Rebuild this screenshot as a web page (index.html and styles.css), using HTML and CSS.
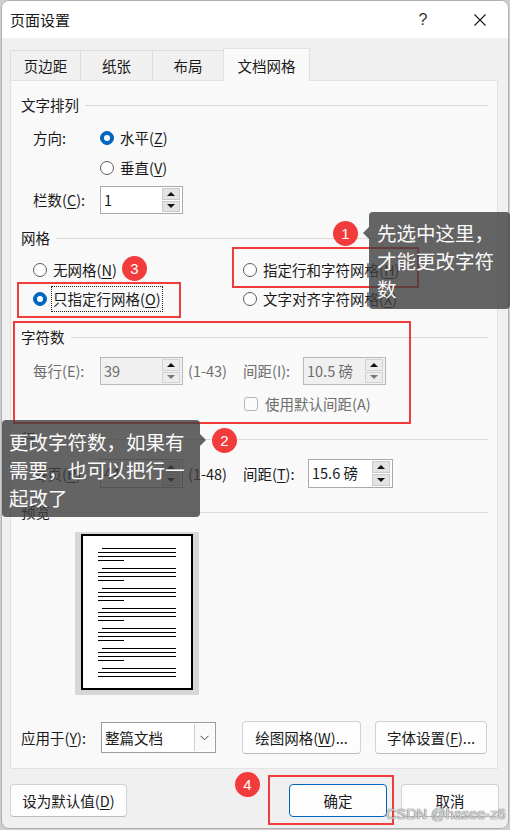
FILE: index.html
```html
<!DOCTYPE html>
<html lang="zh-CN">
<head>
<meta charset="utf-8">
<title>页面设置</title>
<link rel="stylesheet" href="styles.css">
</head>
<body>
<div class="stage">
  <div class="window">
    <div class="titlebar">
      <span class="title">页面设置</span>
      <span class="tb-btn tb-help">?</span>
      <span class="tb-btn tb-close">
        <svg width="12" height="12" viewBox="0 0 12 12"><path d="M0.5 0.5 L11.5 11.5 M11.5 0.5 L0.5 11.5" stroke="#1a1a1a" stroke-width="1.1" fill="none"/></svg>
      </span>
    </div>
    <div class="content">
      <div class="tabs">
        <div class="tab t1">页边距</div>
        <div class="tab t2">纸张</div>
        <div class="tab t3">布局</div>
        <div class="tab t4 active">文档网格</div>
      </div>
      <div class="panel">
        <div class="gh">文字排列</div>
        <div class="row r-dir"><span class="lbl">方向:</span><span class="radio on"><i></i><span>水平(<u>Z</u>)</span></span></div>
        <div class="row r-vert"><span class="lbl"></span><span class="radio"><i></i><span>垂直(<u>V</u>)</span></span></div>
        <div class="row r-cols"><span class="lbl">栏数(<u>C</u>):</span>
          <div class="spin"><span class="val">1</span><div class="spin-btns"><b class="up"></b><b class="down"></b></div></div>
        </div>

        <div class="gh g-grid">网格</div>
        <div class="grid-opts">
          <span class="radio"><i></i><span>无网格(<u>N</u>)</span></span>
          <span class="radio"><i></i><span>指定行和字符网格(<u>H</u>)</span></span>
          <span class="radio on focus"><i></i><span class="focus-rect">只指定行网格(<u>O</u>)</span></span>
          <span class="radio"><i></i><span>文字对齐字符网格(<u>X</u>)</span></span>
        </div>

        <div class="gh g-chars">字符数</div>
        <div class="row r-per dis"><span class="lbl">每行(E):</span>
          <div class="spin disabled"><span class="val">39</span><div class="spin-btns"><b class="up"></b><b class="down"></b></div></div>
          <span class="range">(1-43)</span>
          <span class="lbl2">间距(I):</span>
          <div class="spin disabled"><span class="val">10.5 磅</span><div class="spin-btns"><b class="up"></b><b class="down"></b></div></div>
        </div>
        <div class="row r-check dis"><span class="check"></span><span>使用默认间距(A)</span></div>

        <div class="gh g-lines">行</div>
        <div class="row r-page"><span class="lbl">每页(<u>R</u>):</span>
          <div class="spin"><span class="val">44</span><div class="spin-btns"><b class="up"></b><b class="down"></b></div></div>
          <span class="range">(1-48)</span>
          <span class="lbl2 wide">间距(<u>T</u>):</span>
          <div class="spin"><span class="val">15.6 磅</span><div class="spin-btns"><b class="up"></b><b class="down"></b></div></div>
        </div>

        <div class="gh g-prev">预览</div>
        <div class="preview">
          <svg width="124" height="163" viewBox="0 0 124 163">
            <rect x="0" y="0" width="124" height="163" fill="#d7d7d7"/>
            <rect x="7" y="3" width="110" height="154" fill="#fff" stroke="#000" stroke-width="2"/>
            <g stroke="#000" stroke-width="1.2">
              <path d="M27 16.5H101M23 20.5H101M23 24.5H101M23 28.5H49"/>
              <path d="M27 36.5H101M23 40.5H101M23 44.5H101M23 48.5H49"/>
              <path d="M27 56.5H101M23 60.5H101M23 64.5H101M23 68.5H49"/>
              <path d="M27 76.5H101M23 80.5H101M23 84.5H101M23 88.5H49"/>
              <path d="M27 96.5H101M23 100.5H101M23 104.5H101M23 108.5H49"/>
              <path d="M27 116.5H101M23 120.5H101M23 124.5H101M23 128.5H49"/>
              <path d="M27 136.5H101M23 140.5H101M23 144.5H101"/>
            </g>
          </svg>
        </div>

        <div class="row r-apply">
          <span class="lbl-apply">应用于(<u>Y</u>):</span>
          <div class="select"><span class="sel-text">整篇文档</span><span class="sel-arrow"><svg width="9" height="6" viewBox="0 0 9 6"><path d="M0.5 0.8 L4.5 4.8 L8.5 0.8" stroke="#444" stroke-width="1" fill="none"/></svg></span></div>
          <div class="btn btn-grid"><span>绘图网格(<u>W</u>)...</span></div>
          <div class="btn btn-font"><span>字体设置(<u>F</u>)...</span></div>
        </div>
      </div>
      <div class="footer">
        <div class="btn btn-default"><span>设为默认值(<u>D</u>)</span></div>
        <div class="footer-right">
          <div class="btn btn-ok">确定</div>
          <div class="btn btn-cancel">取消</div>
        </div>
      </div>
    </div>
  </div>

  <div class="mark mark-a"></div>
  <div class="mark mark-b"></div>
  <div class="mark mark-c"></div>
  <div class="mark mark-d"></div>

  <div class="tip tip-1">先选中这里，才能更改字符数</div>
  <div class="tip tip-2">更改字符数，如果有需要，也可以把行一起改了</div>

  <div class="badge b1">1</div>
  <div class="badge b2">2</div>
  <div class="badge b3">3</div>
  <div class="badge b4">4</div>

  <div class="watermark">CSDN @hasee-z6</div>
</div>
</body>
</html>
```

FILE: styles.css
```css
* { box-sizing: border-box; }
html, body { margin: 0; padding: 0; }
body {
  background: #cfcfcf;
  font-family: "Noto Sans CJK SC", "Noto Sans", sans-serif;
  font-size: 14.5px;
  line-height: 20px;
  color: #1a1a1a;
}
u { text-decoration: underline; text-underline-offset: 2px; }

.stage { position: relative; width: 510px; height: 830px; overflow: hidden; }

.window {
  margin-left: 1px;
  width: 508px;
  height: 829px;
  border: 1px solid #b0b0b0;
  border-radius: 8px;
  background: #f0f0f0;
  overflow: hidden;
}

.titlebar {
  height: 37px;
  background: #fff;
  display: flex;
  align-items: center;
  padding-right: 5px;
}
.title { flex: 1; padding-left: 8px; font-size: 15px; }
.tb-btn { width: 46px; height: 37px; display: flex; align-items: center; justify-content: center; }
.tb-help { margin-right: 11px; font-family: "Liberation Sans", sans-serif; font-size: 16px; color: #333; }

.content { padding: 10px 9px 0 8px; }

.tabs { display: flex; align-items: flex-start; height: 33px; }
.tab {
  height: 30px;
  margin-top: 2px;
  margin-right: -1px;
  border: 1px solid #dcdcdc;
  border-bottom: none;
  background: #f0f0f0;
  text-align: center;
  padding-top: 5px;
}
.t1 { width: 71px; }
.t2 { width: 73px; }
.t3 { width: 72px; }
.tab.active {
  position: relative;
  z-index: 1;
  width: 87px;
  height: 33px;
  margin-top: 0;
  padding-top: 7px;
  background: #f9f9f9;
  border-color: #e2e2e2;
}

.panel {
  width: 488px;
  height: 689px;
  margin-top: -1px;
  background: #f9f9f9;
  border: 1px solid #e2e2e2;
  padding: 14px 9px 0 10px;
}

.gh { display: flex; align-items: center; height: 20px; }
.gh::after { content: ""; flex: 1; height: 1px; background: #dadada; margin-left: 6px; }
.g-grid { margin-top: 14px; }
.g-chars { margin-top: 18px; }
.g-lines { margin-top: 15px; }
.g-prev { margin-top: 14px; }

.row { display: flex; align-items: center; padding-left: 12px; }
.lbl { width: 67px; flex: none; }
.r-dir { height: 28px; margin-top: 9px; }
.r-vert { height: 28px; margin-top: 2px; }
.r-cols { height: 28px; margin-top: 4px; }
.r-per { height: 28px; margin-top: 10px; }
.r-check { height: 20px; margin-top: 9px; padding-left: 223px; }
.r-page { height: 29px; margin-top: 10px; }
.r-apply { height: 33px; margin-top: 26px; padding-left: 0; }

.dis { color: #6e6e6e; }

.radio { display: inline-flex; align-items: center; gap: 6px; white-space: nowrap; }
.radio i {
  flex: none;
  width: 14px; height: 14px;
  border: 1px solid #5c5c5c;
  border-radius: 50%;
  background: #fff;
  display: flex; align-items: center; justify-content: center;
}
.radio.on i { background: #0067c0; border-color: #0067c0; }
.radio.on i::after { content: ""; width: 6px; height: 6px; border-radius: 50%; background: #fff; }
.radio.focus { gap: 4px; }
.focus-rect { border: 1px dotted #222; padding: 2px 1px; }

.grid-opts {
  display: grid;
  grid-template-columns: 210px auto;
  grid-auto-rows: 20px;
  row-gap: 9px;
  margin-top: 12px;
  padding-left: 12px;
}

.spin {
  flex: none;
  display: flex;
  width: 83px;
  height: 28px;
  border: 1px solid #a9a9a9;
  background: #fff;
  padding: 1px 2px 1px 0;
  color: #1a1a1a;
}
.r-page .spin { height: 29px; }
.r-page .spin:last-child { width: 85px; }
.spin .val { flex: 1; padding-left: 3px; line-height: 24px; white-space: nowrap; }
.spin-btns { display: flex; flex-direction: column; gap: 1px; width: 18px; }
.spin-btns b {
  flex: 1;
  background: #e3e3e3;
  border: 1px solid #c9c9c9;
  display: flex; align-items: center; justify-content: center;
}
.spin-btns .up::after {
  content: ""; border-left: 4px solid transparent; border-right: 4px solid transparent;
  border-bottom: 4px solid #111;
}
.spin-btns .down::after {
  content: ""; border-left: 4px solid transparent; border-right: 4px solid transparent;
  border-top: 4px solid #111;
}
.spin.disabled { background: #f0f0f0; border-color: #b9b9b9; color: #6e6e6e; }
.spin.disabled .spin-btns b { background: #ececec; border-color: #d3d3d3; }
.spin.disabled .spin-btns .down::after { border-top-color: #7a7a7a; }

.range { width: 60px; padding-left: 5px; flex: none; }
.lbl2 { width: 60px; flex: none; }
.lbl2.wide { width: 65px; }

.check {
  width: 14px; height: 14px;
  border: 1px solid #b5b5b5;
  border-radius: 3px;
  background: #fbfbfb;
  margin-right: 7px;
}

.preview { margin-top: 10px; margin-left: 54px; height: 163px; }
.preview svg { display: block; }

.lbl-apply { width: 80px; flex: none; }
.select {
  display: flex;
  width: 115px;
  height: 31px;
  border: 1px solid #9c9c9c;
  background: #fff;
  padding: 1px;
}
.sel-text { flex: 1; padding-left: 2px; line-height: 27px; }
.sel-arrow {
  width: 20px;
  border-left: 1px solid #cfcfcf;
  background: #fafafa;
  display: flex; align-items: center; justify-content: center;
}

.btn {
  height: 33px;
  border: 1px solid #d2d2d2;
  border-bottom-color: #bcbcbc;
  border-radius: 4px;
  background: #fdfdfd;
  display: flex; align-items: center; justify-content: center;
  white-space: nowrap;
}
.btn-grid { width: 119px; margin-left: 26px; }
.btn-font { width: 112px; margin-left: 14px; }

.footer {
  display: flex;
  justify-content: space-between;
  margin-top: 15px;
}
.footer-right { display: flex; gap: 14px; }
.btn-default { width: 117px; }
.btn-ok { width: 98px; border-color: #0067c0; }
.btn-cancel { width: 98px; }

/* annotation overlays */
.mark { position: absolute; border: 2px solid #f23b3b; }
.mark-a { left: 17px; top: 282px; width: 164px; height: 36px; }
.mark-b { left: 232px; top: 247px; width: 187px; height: 41px; }
.mark-c { left: 13px; top: 321px; width: 398px; height: 103px; }
.mark-d { left: 268px; top: 775px; width: 126px; height: 50px; }

.tip {
  position: absolute;
  background: rgba(62, 62, 62, 0.8);
  color: #fafafa;
  font-size: 19.5px;
  line-height: 28px;
  border-radius: 4px;
}
.tip-1 { left: 369px; top: 212px; width: 141px; height: 97px; padding: 7px 8px 0 8px; }
.tip-1::before {
  content: ""; position: absolute; left: -6px; top: 15px;
  border-top: 6px solid transparent; border-bottom: 6px solid transparent;
  border-right: 6px solid rgba(62, 62, 62, 0.8);
}
.tip-2 { left: 2px; top: 420px; width: 198px; height: 97px; padding: 8px 7px 0 7px; }
.tip-2::after {
  content: ""; position: absolute; right: -6px; top: 14px;
  border-top: 6px solid transparent; border-bottom: 6px solid transparent;
  border-left: 6px solid rgba(62, 62, 62, 0.8);
}

.badge {
  position: absolute;
  width: 25px; height: 25px;
  border-radius: 50%;
  background: #f23b3b;
  color: #fff;
  font-family: "Liberation Sans", sans-serif;
  font-size: 15px;
  display: flex; align-items: center; justify-content: center;
}
.b1 { left: 333px; top: 221px; }
.b2 { left: 212px; top: 428px; }
.b3 { left: 122px; top: 256px; }
.b4 { left: 235px; top: 772px; }

.watermark {
  position: absolute;
  left: 386px; top: 804px;
  font-family: "Liberation Sans", sans-serif;
  font-size: 14.5px;
  color: rgba(255, 255, 255, 0.8);
  text-shadow: 0 0 1px #555, 0 0 1px #555;
}
```
